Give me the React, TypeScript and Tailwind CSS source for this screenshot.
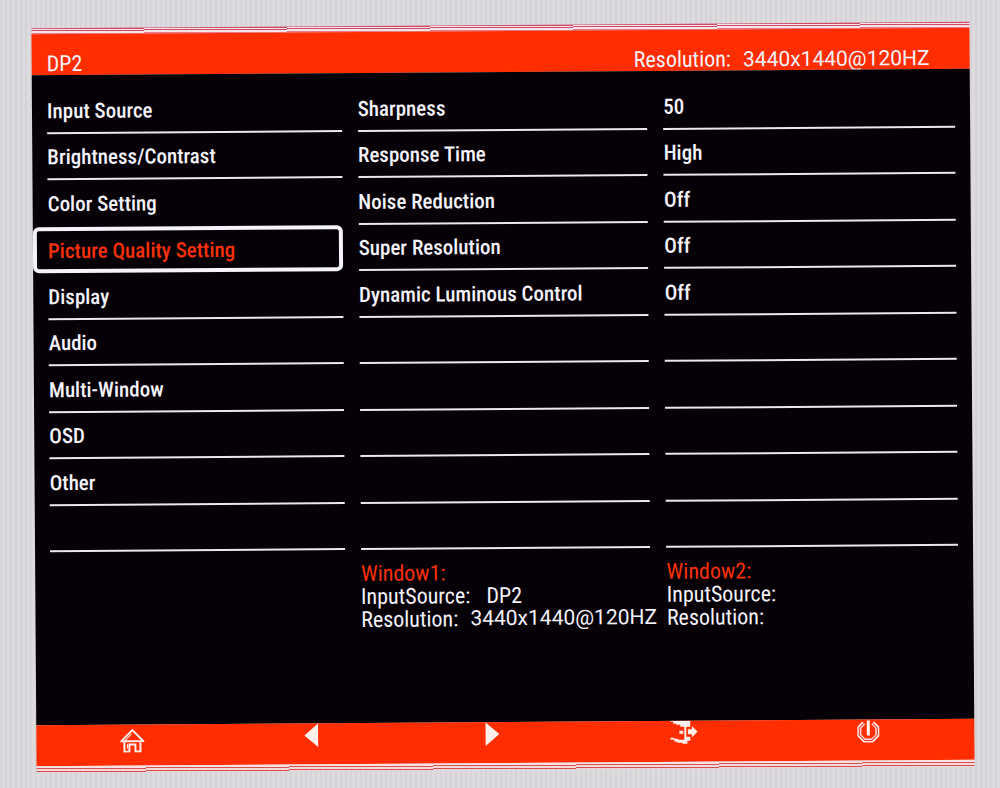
const menu = [
  "Input Source",
  "Brightness/Contrast",
  "Color Setting",
  "Picture Quality Setting",
  "Display",
  "Audio",
  "Multi-Window",
  "OSD",
  "Other",
  "",
];

const settings = [
  ["Sharpness", "50"],
  ["Response Time", "High"],
  ["Noise Reduction", "Off"],
  ["Super Resolution", "Off"],
  ["Dynamic Luminous Control", "Off"],
  ["", ""],
  ["", ""],
  ["", ""],
  ["", ""],
  ["", ""],
];

const ACTIVE = 3;

const Mode = ({ children }: { children: string }) => (
  <span className="font-['Roboto',sans-serif] text-[21px]">{children}</span>
);

const Header = () => (
  <header className="flex h-[41px] items-end justify-between bg-[#ff2d00] pl-[15px] pr-10 leading-[22px]">
    <h1>DP2</h1>
    <p className="flex gap-3">
      <span>Resolution:</span>
      <Mode>3440x1440@120HZ</Mode>
    </p>
  </header>
);

const Menu = () => (
  <nav className="grid auto-rows-fr font-medium">
    {menu.map((item, i) => {
      if (i === ACTIVE) {
        return (
          <button
            key={i}
            aria-current="page"
            className="-ml-[15px] rounded-md border-4 border-[#f4f2fa] pt-1 pl-[11px] text-left text-[#f8300c]"
          >
            {item}
          </button>
        );
      }
      // the frame of the active row stands in for the line above it
      const line = i === ACTIVE - 1 ? "border-transparent" : "border-[#ece8f0]";
      return item ? (
        <button key={i} className={`border-b-2 pt-1 text-left ${line}`}>
          {item}
        </button>
      ) : (
        <div key={i} className={`border-b-2 ${line}`} />
      );
    })}
  </nav>
);

const Column = ({ items }: { items: string[] }) => (
  <div className="grid auto-rows-fr font-medium">
    {items.map((item, i) => (
      <div key={i} className="flex items-center border-b-2 border-[#ece8f0] pt-1">
        {item}
      </div>
    ))}
  </div>
);

const HomeIcon = () => (
  <svg width="24" height="24" viewBox="0 0 24 24" fill="none" stroke="#fff0ec" strokeWidth="2">
    <path d="M1 12.5 12 1.5l11 11H1ZM4 13v10h5v-7h6v7h5V13" />
    <path d="M5 11.5 11 5.500M7 15v5" strokeWidth="1" />
  </svg>
);

const ExitIcon = () => (
  <svg width="28" height="24" viewBox="0 0 28 24" fill="#fff0ec">
    <path d="M0 0h20v6h-4v10h4v4h-3v3h-5v-1H7v-1H4v-2H0v-2h4v1h4v1h6V6h-4V4H6V3H3V1H0zM9 10h4v3H9z" />
    <path d="M17 8h4V4l7 7-7 7v-4h-4z" stroke="#ff2d00" />
  </svg>
);

const PowerIcon = () => (
  <svg width="24" height="24" viewBox="0 0 24 24" fill="none">
    <path d="M7.500 3.500 3 8v8l5 5h8l5-5V8l-4.500-4.500" stroke="#ffe4df" strokeWidth="4" />
    <path d="M7.500 4 3 8.500v7L8.500 21h7l5.500-5.500v-7L16.500 4" stroke="#e8302c" strokeWidth="1" />
    <path d="M12 1v15" stroke="#fff4f2" strokeWidth="3" />
  </svg>
);

const Footer = () => (
  <footer className="grid h-[41px] grid-cols-[184fr_174fr_188fr_196fr_172fr] items-start justify-items-center bg-[#ff2d00] pl-1 pr-5">
    <button aria-label="Home" className="pt-1">
      <HomeIcon />
    </button>
    <button aria-label="Previous">
      <svg width="14" height="24" fill="#fff0ec">
        <path d="M14 0v24L0 12z" />
      </svg>
    </button>
    <button aria-label="Next">
      <svg width="14" height="24" fill="#fff0ec">
        <path d="M0 0v24l14-12z" />
      </svg>
    </button>
    <button aria-label="Exit">
      <ExitIcon />
    </button>
    <button aria-label="Power">
      <PowerIcon />
    </button>
  </footer>
);

export default function App() {
  return (
    <div className="flex min-h-screen flex-col overflow-hidden bg-[#dad8dc] bg-[repeating-linear-gradient(90deg,#00000006_0_2px,#ffffff12_2px_5px)] pt-[25px] pr-7 pb-[18px] pl-[34px] font-['Roboto_Condensed','DejaVu_Sans_Condensed',sans-serif] text-[22px] text-[#f4f2fa]">
      <div className="flex grow -rotate-[0.4deg] flex-col">
        <div className="h-[6px] bg-[linear-gradient(#d04a68_0_1px,#f3e4ea_1px_2px,#d04a68_2px_3px,#f3e4ea_3px_5px,#e87890_5px_6px)]" />
        <Header />
        <main className="grow bg-[#050106] px-[15px] pt-3">
          <div className="grid h-[465px] grid-cols-[295fr_290fr_292fr] gap-4 text-[21px]">
            <Menu />
            <Column items={settings.map((s) => s[0])} />
            <Column items={settings.map((s) => s[1])} />
          </div>
          <div className="grid grid-cols-[295fr_290fr_292fr] gap-4 pt-3 leading-[23px]">
            <section className="col-start-2 min-w-0 whitespace-nowrap">
              <h2 className="text-[#f8300c]">Window1:</h2>
              <p className="flex gap-4">
                <span>InputSource:</span>
                <span>DP2</span>
              </p>
              <p className="flex gap-3">
                <span>Resolution:</span>
                <Mode>3440x1440@120HZ</Mode>
              </p>
            </section>
            <section className="min-w-0">
              <h2 className="text-[#f8300c]">Window2:</h2>
              <p>InputSource:</p>
              <p>Resolution:</p>
            </section>
          </div>
        </main>
        <Footer />
        <div className="h-[7px] bg-[linear-gradient(#f6e2e4_0_2px,#d8504c_2px_3px,#f3d8dc_3px_5px,#d8504c_5px_6px,#ecd4d8_6px_7px)]" />
      </div>
    </div>
  );
}
